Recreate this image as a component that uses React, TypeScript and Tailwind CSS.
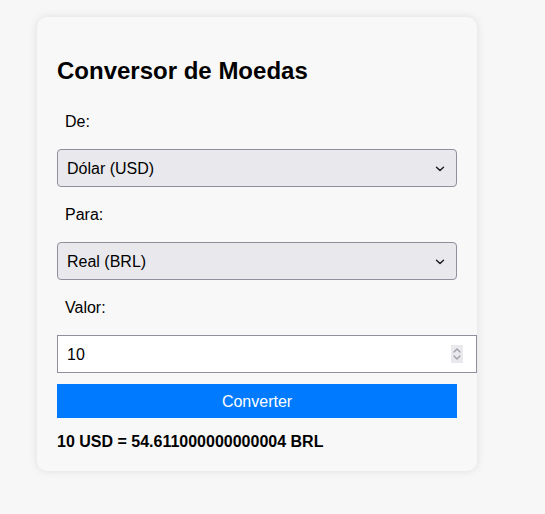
import React from "react";

function Chevron() {
  return (
    <svg width="10" height="6" viewBox="0 0 10 6" className="absolute right-[11px] top-[16px] pointer-events-none">
      <path d="M1.5 1.2 L5 4.6 L8.5 1.2" fill="none" stroke="#1b1b1f" strokeWidth="1.4" strokeLinecap="round" strokeLinejoin="round" />
    </svg>
  );
}

function FakeSelect({ value }: { value: string }) {
  return (
    <div className="relative mt-[19px] h-[38px] w-[400px] rounded-[4px] border border-[#8f8f9d] bg-[#e9e9ed]">
      <div className="pl-[9px] pt-[1px] leading-[36px] text-[16px] text-[#000]">{value}</div>
      <Chevron />
    </div>
  );
}

export default function App() {
  return (
    <div className="min-h-[514px] w-full bg-[#f7f7f7] pt-[17px] pl-[37px]" style={{ fontFamily: '"Liberation Sans", Arial, sans-serif' }}>
      <div className="w-[440px] rounded-[10px] bg-[#f8f8f8] px-[20px] pt-[40px] pb-[21px] shadow-[0_0_10px_rgba(0,0,0,0.1)]">
        <h2 className="m-0 text-[24px] font-bold leading-[28px] text-black">Conversor de Moedas</h2>
        <div className="mt-[28px] h-[17px] pl-[8px] text-[16px] leading-[18px] text-black">De:</div>
        <FakeSelect value="Dólar (USD)" />
        <div className="mt-[19px] h-[17px] pl-[8px] text-[16px] leading-[18px] text-black">Para:</div>
        <FakeSelect value="Real (BRL)" />
        <div className="mt-[19px] h-[17px] pl-[8px] text-[16px] leading-[18px] text-black">Valor:</div>
        <div className="relative mt-[19px] h-[38px] w-[420px] border border-[#8f8f9d] bg-white">
          <div className="pl-[9px] pt-[1px] leading-[36px] text-[16px] text-black">10</div>
          <div className="absolute right-[13px] top-[9px] flex h-[18px] w-[12px] flex-col items-center justify-center bg-[#e9e9ed]">
            <svg width="10" height="16" viewBox="0 0 10 16">
              <path d="M2 6 L5 3 L8 6" fill="none" stroke="#9b9ba6" strokeWidth="1.2" strokeLinecap="round" strokeLinejoin="round" />
              <path d="M2 10 L5 13 L8 10" fill="none" stroke="#9b9ba6" strokeWidth="1.2" strokeLinecap="round" strokeLinejoin="round" />
            </svg>
          </div>
        </div>
        <button className="mt-[11px] block h-[34px] w-[400px] bg-[#007bff] pt-[2px] text-[16px] leading-[32px] text-white">Converter</button>
        <div className="mt-[15px] h-[17px] text-[16px] font-bold leading-[18px] text-black">10 USD = 54.611000000000004 BRL</div>
      </div>
    </div>
  );
}
